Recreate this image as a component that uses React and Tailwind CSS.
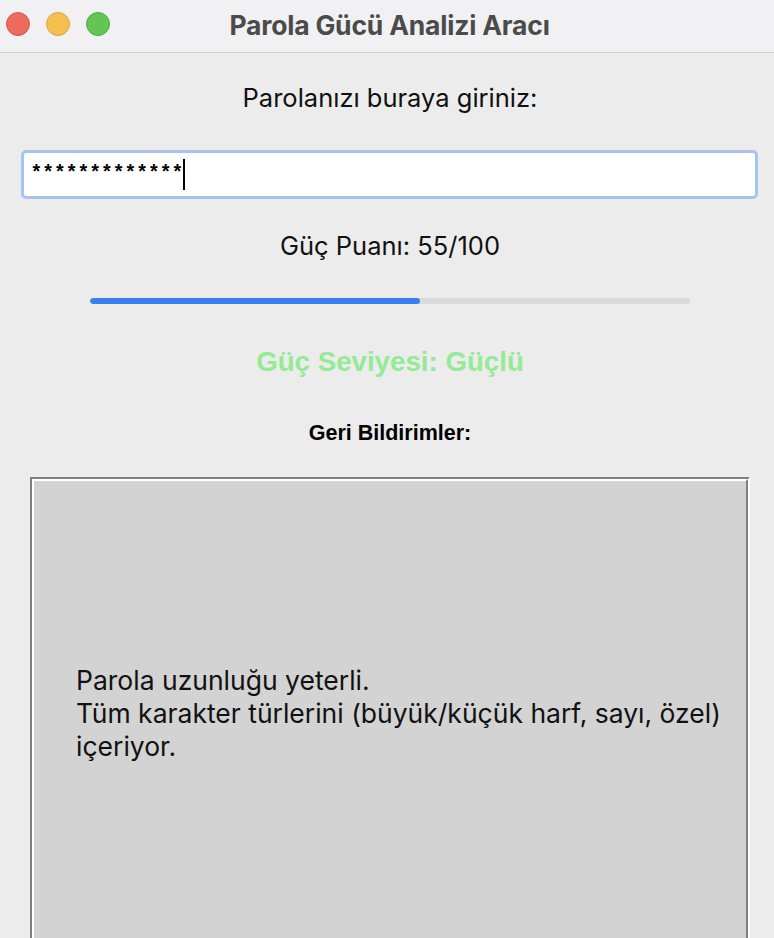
import React from "react";

export default function App() {
  const score = 55;
  return (
    <div className="w-[774px] h-[938px] overflow-hidden bg-[#ececec] flex flex-col" style={{ fontFamily: "Inter, 'Noto Sans', sans-serif" }}>
      {/* Title bar */}
      <div className="relative h-[53px] shrink-0 bg-[#f1f1f3] border-b border-[#cfcfcf] flex items-center justify-center pl-[5px]">
        <div className="absolute left-[6px] top-[12px] flex gap-[16px]">
          <span className="w-[24px] h-[24px] rounded-full bg-[#ee6a5f] border border-[#d8574c]" />
          <span className="w-[24px] h-[24px] rounded-full bg-[#f5be4f] border border-[#dca33a]" />
          <span className="w-[24px] h-[24px] rounded-full bg-[#62c554] border border-[#4eab41]" />
        </div>
        <span className="text-[26.5px] font-bold text-[#4b4b4b] tracking-[-0.2px]">Parola Gücü Analizi Aracı</span>
      </div>

      <div className="flex flex-col items-center pl-[6px]">
        <div className="mt-[31px] h-[28px] leading-[28px] text-[25.5px] text-[#111] whitespace-nowrap">Parolanızı buraya giriniz:</div>

        <div className="mt-[38px] w-[737px] h-[49px] rounded-[5px] border-[3px] border-[#a6c4ef] bg-white flex items-center pl-[7px] -translate-x-[1px]">
          <span className="text-[19.6px] font-bold text-black leading-none" style={{ fontFamily: "'Liberation Mono', monospace" }}>*************</span>
          <span className="w-[2px] h-[31px] bg-black" />
        </div>

        <div className="mt-[33px] h-[28px] leading-[28px] text-[25.5px] text-[#111] whitespace-nowrap">Güç Puanı: {score}/100</div>

        <div className="mt-[38px] w-[600px] h-[6px] rounded-full bg-[#d9d9d9] overflow-hidden">
          <div className="h-full rounded-full bg-[#3a7ff2]" style={{ width: `${score}%` }} />
        </div>

        <div className="mt-[43px] h-[30px] leading-[30px] text-[27.7px] font-bold text-[#95ea95] whitespace-nowrap" style={{ fontFamily: "'Liberation Sans', Arial, sans-serif" }}>Güç Seviyesi: Güçlü</div>

        <div className="mt-[46px] h-[20px] leading-[20px] text-[21.5px] font-bold text-black whitespace-nowrap" style={{ fontFamily: "'Liberation Sans', Arial, sans-serif" }}>Geri Bildirimler:</div>

        <div className="mt-[34px] w-[720px] h-[472px] border-2 border-t-[#808080] border-l-[#808080] border-r-white border-b-white shrink-0">
          <div className="w-full h-full border-2 border-t-white border-l-white border-r-[#808080] border-b-[#808080] bg-[#d3d3d3] flex items-center pl-[42px]">
            <div className="text-[26.5px] leading-[33px] text-[#111] whitespace-nowrap">
              <div>Parola uzunluğu yeterli.</div>
              <div>Tüm karakter türlerini (büyük/küçük harf, sayı, özel)</div>
              <div>içeriyor.</div>
            </div>
          </div>
        </div>
      </div>
    </div>
  );
}
